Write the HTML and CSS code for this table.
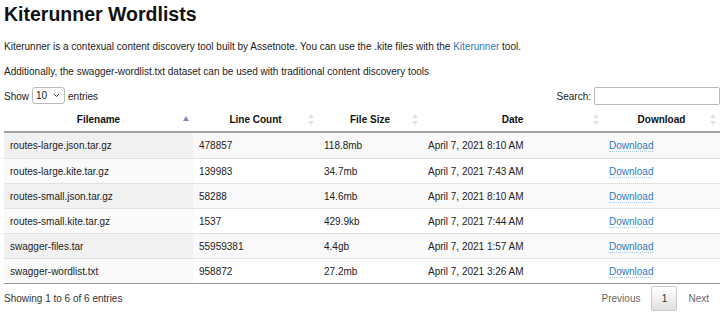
FILE: index.html
```html
<!DOCTYPE html>
<html lang="en">
<head>
    <meta charset="UTF-8">
    <meta name="viewport" content="width=device-width, initial-scale=1.0">
    <title>Kiterunner Wordlists</title>
    <link rel="stylesheet" href="styles.css">
</head>
<body>
    <div class="page">
        <h1>Kiterunner Wordlists</h1>
        <p>Kiterunner is a contexual content discovery tool built by Assetnote. You can use the .kite files with the <a href="#" class="link">Kiterunner</a> tool.</p>
        <p>Additionally, the swagger-wordlist.txt dataset can be used with traditional content discovery tools</p>

        <div class="controls">
            <label class="length">Show
                <span class="select">10 <svg width="7" height="5" viewBox="0 0 7 5"><path d="M1 1 L3.5 3.5 L6 1" fill="none" stroke="#333" stroke-width="1"/></svg></span>
                entries</label>
            <label class="search">Search: <input type="text" class="search-input"></label>
        </div>

        <table class="wordlists">
            <thead>
                <tr>
                    <th class="c1">Filename<span class="sort asc"><svg width="6" height="5" viewBox="0 0 6 5"><path d="M3 0 L6 5 L0 5 Z" fill="#8a87c9"/></svg></span></th>
                    <th class="c2">Line Count<span class="sort"><svg width="6" height="11" viewBox="0 0 6 11"><path d="M3 0 L6 4 L0 4 Z M3 11 L6 7 L0 7 Z" fill="#e2e2e2"/></svg></span></th>
                    <th class="c3">File Size<span class="sort"><svg width="6" height="11" viewBox="0 0 6 11"><path d="M3 0 L6 4 L0 4 Z M3 11 L6 7 L0 7 Z" fill="#e2e2e2"/></svg></span></th>
                    <th class="c4">Date<span class="sort"><svg width="6" height="11" viewBox="0 0 6 11"><path d="M3 0 L6 4 L0 4 Z M3 11 L6 7 L0 7 Z" fill="#e2e2e2"/></svg></span></th>
                    <th class="c5">Download<span class="sort"><svg width="6" height="11" viewBox="0 0 6 11"><path d="M3 0 L6 4 L0 4 Z M3 11 L6 7 L0 7 Z" fill="#e2e2e2"/></svg></span></th>
                </tr>
            </thead>
            <tbody>
                <tr class="odd">
                    <td class="sorted">routes-large.json.tar.gz</td>
                    <td>478857</td>
                    <td>118.8mb</td>
                    <td>April 7, 2021 8:10 AM</td>
                    <td><a href="#" class="dl">Download</a></td>
                </tr>
                <tr class="even">
                    <td class="sorted">routes-large.kite.tar.gz</td>
                    <td>139983</td>
                    <td>34.7mb</td>
                    <td>April 7, 2021 7:43 AM</td>
                    <td><a href="#" class="dl">Download</a></td>
                </tr>
                <tr class="odd">
                    <td class="sorted">routes-small.json.tar.gz</td>
                    <td>58288</td>
                    <td>14.6mb</td>
                    <td>April 7, 2021 8:10 AM</td>
                    <td><a href="#" class="dl">Download</a></td>
                </tr>
                <tr class="even">
                    <td class="sorted">routes-small.kite.tar.gz</td>
                    <td>1537</td>
                    <td>429.9kb</td>
                    <td>April 7, 2021 7:44 AM</td>
                    <td><a href="#" class="dl">Download</a></td>
                </tr>
                <tr class="odd">
                    <td class="sorted">swagger-files.tar</td>
                    <td>55959381</td>
                    <td>4.4gb</td>
                    <td>April 7, 2021 1:57 AM</td>
                    <td><a href="#" class="dl">Download</a></td>
                </tr>
                <tr class="even">
                    <td class="sorted">swagger-wordlist.txt</td>
                    <td>958872</td>
                    <td>27.2mb</td>
                    <td>April 7, 2021 3:26 AM</td>
                    <td><a href="#" class="dl">Download</a></td>
                </tr>
            </tbody>
        </table>

        <div class="footer">
            <div class="info">Showing 1 to 6 of 6 entries</div>
            <div class="paging">
                <span class="page-btn disabled">Previous</span>
                <span class="page-btn current">1</span>
                <span class="page-btn disabled">Next</span>
            </div>
        </div>
    </div>
</body>
</html>
```

FILE: styles.css
```css
body {
    margin: 0;
    background: #fff;
    font-family: "Liberation Sans", Arial, sans-serif;
    font-size: 10px;
    color: #222;
}
.page {
    width: 716px;
    padding-left: 4px;
}
h1 {
    margin: 0;
    font-size: 19.5px;
    line-height: 28px;
    padding-bottom: 6px;
    color: #111;
}
p {
    margin: 0;
    line-height: 25px;
}
.link, .dl {
    color: #2b7bc0;
    text-decoration: none;
}
.dl {
    border-bottom: 1px dotted #a9cbe8;
}
.controls {
    display: flex;
    justify-content: space-between;
    align-items: center;
    height: 24px;
}
.length {
    display: flex;
    align-items: center;
    gap: 3px;
}
.select {
    display: inline-flex;
    align-items: center;
    justify-content: space-between;
    box-sizing: border-box;
    width: 33px;
    height: 17px;
    padding: 0 4px 0 3px;
    border: 1px solid #bbb;
    border-radius: 3px;
    font-size: 10px;
    margin-top: -1px;
}
.search {
    display: flex;
    align-items: center;
    gap: 3px;
}
.search-input {
    box-sizing: border-box;
    width: 126px;
    height: 18px;
    margin: 0;
    border: 1px solid #bbb;
    border-radius: 2px;
    padding: 0;
}
.wordlists {
    width: 716px;
    border-collapse: collapse;
    table-layout: fixed;
    border-bottom: 1px solid #999;
}
.wordlists th {
    position: relative;
    height: 23px;
    padding: 0 6px;
    font-weight: bold;
    text-align: center;
    color: #111;
    border-bottom: 2px solid #a3a3a3;
}
.c1 { width: 177px; }
.c2 { width: 113px; }
.c3 { width: 92px; }
.c4 { width: 169px; }
.c5 { width: 105px; }
.sort {
    position: absolute;
    right: 4px;
    top: 6px;
    line-height: 0;
}
.sort.asc {
    top: 8px;
}
.wordlists td {
    height: 24px;
    padding: 0 6px;
    border-top: 1px solid #e2e2e2;
    white-space: nowrap;
}
.wordlists tbody tr:first-child td {
    border-top: none;
    height: 25px;
}
.odd td {
    background: #f9f9f9;
}
.odd td.sorted {
    background: #f1f1f1;
}
.even td.sorted {
    background: #fafafa;
}
.footer {
    display: flex;
    justify-content: space-between;
    align-items: center;
    height: 29px;
}
.info {
    color: #333;
}
.paging {
    display: flex;
    align-items: center;
}
.page-btn {
    padding: 0 11px;
    color: #666;
}
.page-btn.current {
    box-sizing: border-box;
    height: 25px;
    width: 26px;
    padding: 0;
    line-height: 23px;
    text-align: center;
    color: #333;
    border: 1px solid #cacaca;
    border-radius: 2px;
    background: linear-gradient(#fff, #e0e0e0);
}
```
